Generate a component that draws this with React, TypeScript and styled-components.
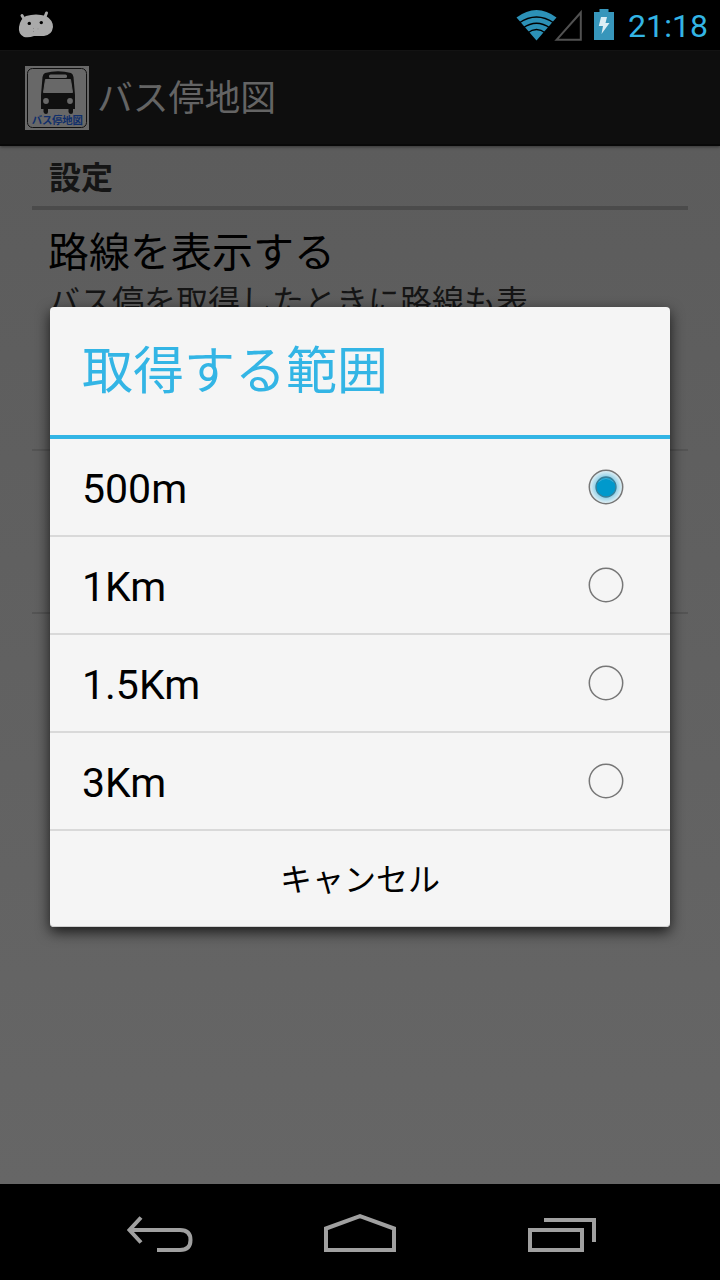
import React from "react";
import styled, { createGlobalStyle } from "styled-components";

const Global = createGlobalStyle`
  * { box-sizing: border-box; }
  body { margin: 0; background: #000; font-family: Roboto, "Noto Sans CJK JP", sans-serif; }
`;

const Screen = styled.div`
  position: relative;
  width: 720px;
  height: 1280px;
  overflow: hidden;
  display: flex;
  flex-direction: column;
  background: linear-gradient(#5c5c5c 146px, #666 1184px);
`;

const StatusBar = styled.header`
  height: 50px;
  flex: none;
  display: flex;
  align-items: flex-start;
  justify-content: space-between;
  background: #000;
`;

const StatusIcons = styled.div`
  display: flex;
  height: 50px;
  padding-right: 12px;
`;

const Clock = styled.span`
  margin-left: 12px;
  width: 80px;
  white-space: nowrap;
  color: #33b5e5;
  font-size: 32px;
  line-height: 52px;
  letter-spacing: 0.1px;
`;

const ActionBar = styled.div`
  height: 96px;
  flex: none;
  display: flex;
  align-items: center;
  padding: 0 0 0 25px;
  background: #0e0e0e;
  border-top: 1px solid #131313;
  border-bottom: 2px solid #080808;
  box-shadow: 0 1px 3px rgba(0, 0, 0, 0.45);
`;

const AppTitle = styled.h1`
  margin: 0 0 0 8px;
  padding-top: 3px;
  color: #646464;
  font-size: 35.8px;
  font-weight: 400;
  line-height: 90px;
`;

const Preferences = styled.main`
  flex: 1;
  padding: 0 32px;
`;

const Category = styled.h2`
  height: 64px;
  margin: 0;
  padding-left: 17px;
  border-bottom: 4px solid #4b4b4b;
  color: #151515;
  font-size: 32px;
  font-weight: 700;
  line-height: 64px;
`;

const Preference = styled.section<{ $height: number }>`
  height: ${(p) => p.$height}px;
  padding: 16px 16px 0;
  border-bottom: 2px solid #545454;
`;

const PreferenceTitle = styled.div`
  color: #000;
  font-size: 41px;
  line-height: 54px;
`;

const PreferenceSummary = styled.div`
  margin-top: 1px;
  color: #151515;
  font-size: 32px;
  line-height: 42px;
`;

const Dialog = styled.div`
  position: absolute;
  left: 50px;
  top: 307px;
  width: 620px;
  height: 620px;
  display: flex;
  flex-direction: column;
  border-radius: 4px;
  background: #f5f5f5;
  box-shadow: 0 5px 14px rgba(0, 0, 0, 0.75), inset 0 -1px 0 #cfcfcf;
`;

const DialogTitle = styled.h2`
  height: 132px;
  margin: 0;
  padding-left: 32px;
  border-bottom: 4px solid #33b5e5;
  color: #33b5e5;
  font-size: 51px;
  font-weight: 400;
  line-height: 129px;
`;

const Option = styled.div`
  height: 98px;
  display: flex;
  align-items: center;
  justify-content: space-between;
  padding: 0 46px 0 32px;
  border-bottom: 2px solid #d9d9d9;
`;

const OptionLabel = styled.span`
  padding-top: 3px;
  color: #000;
  font-size: 41px;
  line-height: 48px;
`;

const CancelButton = styled.button`
  flex: 1;
  padding: 0 0 4px;
  border: 0;
  background: none;
  color: #000;
  font: inherit;
  font-size: 32px;
`;

const NavBar = styled.nav`
  height: 96px;
  flex: none;
  display: flex;
  align-items: center;
  padding-top: 6px;
  background: #000;
`;

const NavIcon = styled.svg<{ $gap: number }>`
  flex: none;
  margin-left: ${(p) => p.$gap}px;
  fill: none;
  stroke: #a0a0a0;
  stroke-width: 4;
`;

const DebugIcon = () => (
  <svg width="60" height="50" viewBox="0 0 60 50">
    <path d="M22 15.500l3 5M46.500 13l-2 5" stroke="#aaa" strokeWidth="3" strokeLinecap="round" />
    <path d="M26 16Q36 13 46 16Q53 20 53 27Q52 35 44 36L34 36Q29 38 24 37Q18 34 19 27Q20 19 26 16Z" fill="#aaa" />
    <circle cx="29.300" cy="23.400" r="1.700" />
    <circle cx="41.300" cy="22.600" r="1.700" />
    <path d="M33.500 28v1M33.500 31v1M38 28.500v.8" stroke="#8a8a8a" />
  </svg>
);

const SignalIcons = () => (
  <svg width="104" height="50" viewBox="512 0 104 50">
    <path d="M516.500 17.500Q536.500 2.500 556.500 17.500L536.500 40.500Z" fill="#2c91b7" />
    <g fill="none" stroke="#000" strokeWidth="1.500">
      <path d="M519 23Q536.500 11 554 23" />
      <path d="M523 28Q536.500 18.500 550 28" />
      <path d="M527.500 33Q536.500 26 545.500 33" />
    </g>
    <path d="M556.500 39.800L580.800 12.500V39.800Z" fill="none" stroke="#515151" strokeWidth="2" />
    <path d="M594 12h5.500V9h9v3h5.500v28H594Z" fill="#3796bb" />
    <path d="M601 17h6l-1.500 6h4l-8 11 1.500-8h-4.200Z" fill="#dceef5" />
  </svg>
);

const LogoText = styled.text`
  font-size: 10.4px;
  font-weight: 700;
  fill: #102f6b;
`;

const BusLogo = () => (
  <svg width="64" height="64" viewBox="0 0 64 64">
    <path fill="#686868" d="M0 0h64v64H0z" />
    <rect x="2.500" y="2.500" width="59" height="59" rx="5" fill="none" stroke="#101010" />
    <path
      d="M20 7Q33 3.500 46 7Q48 8 48.500 11L50 29V43H48V46Q48 48 46 48T43.500 46V43H23V46Q23 48 21 48T18.500 46V43H16V29L17.500 11Q18 8 20 7Z"
      fill="#101010"
    />
    <rect x="24" y="8.500" width="18" height="3.500" rx="1.500" fill="#686868" />
    <path d="M20.500 13.500H45.500L47.500 26.500H18.500Z" fill="#686868" stroke="#686868" strokeLinejoin="round" />
    <circle cx="21" cy="35" r="2.900" fill="#686868" />
    <circle cx="45" cy="35" r="2.900" fill="#686868" />
    <LogoText x="6.800" y="58.400" textLength="51">バス停地図</LogoText>
  </svg>
);

const Radio = ({ checked }: { checked: boolean }) => (
  <svg width="36" height="36" viewBox="0 0 36 36">
    <defs>
      <radialGradient id="glow">
        <stop offset="0.600" stopColor="#8fd0e8" />
        <stop offset="1" stopColor="#e8f2f5" />
      </radialGradient>
    </defs>
    <circle cx="18" cy="18" r="16.700" fill={checked ? "url(#glow)" : "none"} stroke="#777" strokeWidth="1.500" />
    {checked && <circle cx="18" cy="18" r="10" fill="#0099cc" stroke="#397f98" strokeWidth="1.300" />}
    {checked && <path d="M10.500 13Q18 6 25.500 13" fill="none" stroke="#40aed4" />}
  </svg>
);

const options = ["500m", "1Km", "1.5Km", "3Km"];

export default function App() {
  return (
    <Screen>
      <Global />
      <StatusBar>
        <DebugIcon />
        <StatusIcons>
          <SignalIcons />
          <Clock>21:18</Clock>
        </StatusIcons>
      </StatusBar>
      <ActionBar>
        <BusLogo />
        <AppTitle>バス停地図</AppTitle>
      </ActionBar>
      <Preferences>
        <Category>設定</Category>
        <Preference $height={241}>
          <PreferenceTitle>路線を表示する</PreferenceTitle>
          <PreferenceSummary>バス停を取得したときに路線も表</PreferenceSummary>
        </Preference>
        <Preference $height={163} />
      </Preferences>
      <NavBar>
        <NavIcon $gap={124} width="72" height="50" viewBox="124 1210 72 50">
          <path d="M141 1217.500L129.500 1230L141 1242.500M130 1230H180Q190.500 1230 190.500 1240T180 1250H157" />
        </NavIcon>
        <NavIcon $gap={126} width="76" height="50" viewBox="322 1210 76 50">
          <path d="M326 1250V1228.500L360 1216.200L394 1228.500V1250Z" />
        </NavIcon>
        <NavIcon $gap={128} width="74" height="50" viewBox="526 1210 74 50">
          <path d="M530 1230H582V1250H530ZM544 1220H594V1242" />
        </NavIcon>
      </NavBar>
      <Dialog role="dialog">
        <DialogTitle>取得する範囲</DialogTitle>
        {options.map((label, i) => (
          <Option key={label}>
            <OptionLabel>{label}</OptionLabel>
            <Radio checked={i === 0} />
          </Option>
        ))}
        <CancelButton>キャンセル</CancelButton>
      </Dialog>
    </Screen>
  );
}
